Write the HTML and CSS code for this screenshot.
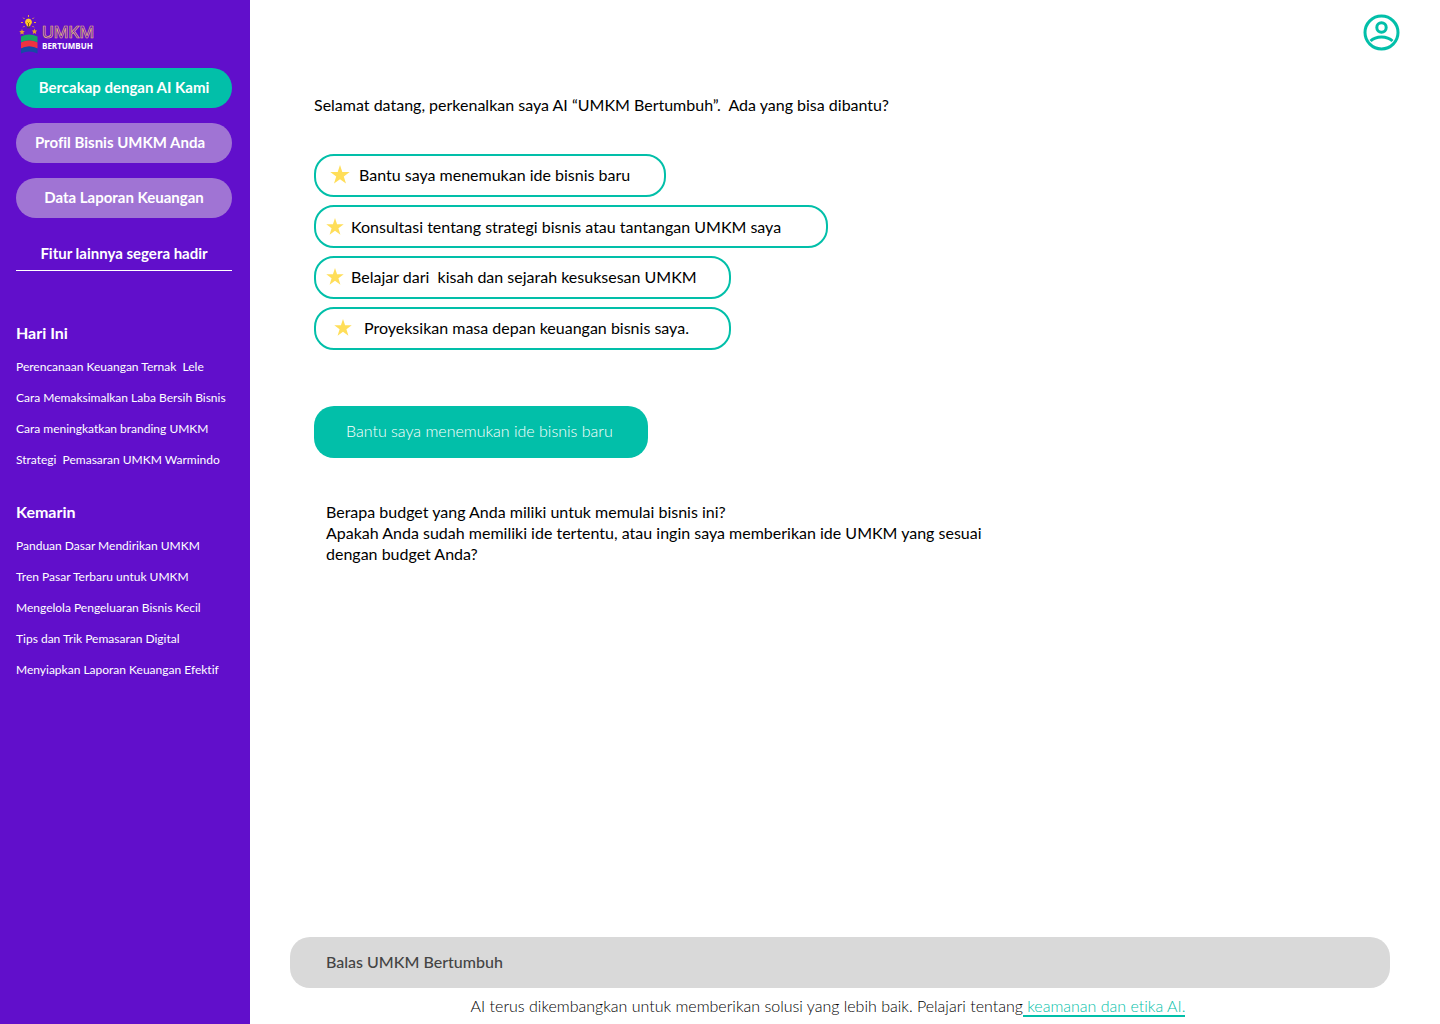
FILE: index.html
```html
<!DOCTYPE html>
<html lang="id">
<head>
<meta charset="utf-8">
<meta name="viewport" content="width=device-width, initial-scale=1">
<title>UMKM Bertumbuh</title>
<link rel="stylesheet" href="styles.css">
</head>
<body>
<svg width="0" height="0" class="sprite" aria-hidden="true">
  <symbol id="star" viewBox="0 0 20 20"><path d="M10 0 12.300 7 19.700 7 13.800 11.500 16 18.500 10 14.200 4 18.500 6.200 11.500 0.300 7 7.700 7Z" fill="#ffde59"/></symbol>
</svg>
<div class="app">
  <aside class="sidebar">
    <a class="logo" href="#" aria-label="UMKM Bertumbuh">
      <svg width="80" height="42" viewBox="0 0 80 42">
        <g stroke="#f5b82e" stroke-width="1" stroke-linecap="round">
          <path d="M10.500 1.500v1M5.500 4l.7.700M15.500 4l-.7.700M3.500 8.500h1M16.500 8.500h1M5.500 13l.7-.7M15.500 13l-.7-.7"/>
        </g>
        <path d="M10.500 4.500a3.600 3.600 0 0 0-2 6.500l.5 1.500h3l.5-1.500a3.600 3.600 0 0 0-2-6.500Z" fill="#ffc928"/>
        <path d="M9.500 8.500l1 1 1-1M10.500 9.500V12" stroke="#6b3b00" stroke-width=".8" fill="none"/>
        <path d="M9 12.500h3v1.800H9z" fill="#4b3a58"/>
        <path d="M4 15l.8 1.900 2 .2-1.500 1.300.4 2L4 19.400l-1.700 1 .4-2-1.500-1.300 2-.2ZM16.500 14.500l.8 1.900 2 .2-1.500 1.300.4 2-1.700-1-1.700 1 .4-2-1.500-1.300 2-.2Z" fill="#e9a02b"/>
        <path d="M3 22.500q8-4 16.500 0v6q-8.500-4-16.500 0Z" fill="#16a765"/>
        <path d="M3 28.500q8-4 16.500 0v6q-8.500-4-16.500 0Z" fill="#ef3340"/>
        <path d="M3 34.500q8-4 16.500 0v5q-8.500-4-16.500 0Z" fill="#1749a5"/>
        <text x="24" y="24" class="logo-outline">UMKM</text>
        <text x="24" y="35" class="logo-name">BERTUMBUH</text>
      </svg>
    </a>
    <nav class="menu">
      <button type="button" class="menu-button menu-button-active">Bercakap dengan AI Kami</button>
      <button type="button" class="menu-button menu-button-profile">Profil Bisnis UMKM Anda</button>
      <button type="button" class="menu-button">Data Laporan Keuangan</button>
    </nav>
    <p class="soon">Fitur lainnya segera hadir</p>
    <section class="history">
      <h2>Hari Ini</h2>
      <ul>
        <li><a href="#">Perencanaan Keuangan Ternak&nbsp; Lele</a></li>
        <li><a href="#">Cara Memaksimalkan Laba Bersih Bisnis</a></li>
        <li><a href="#">Cara meningkatkan branding UMKM</a></li>
        <li><a href="#">Strategi&nbsp; Pemasaran UMKM Warmindo</a></li>
      </ul>
    </section>
    <section class="history">
      <h2>Kemarin</h2>
      <ul>
        <li><a href="#">Panduan Dasar Mendirikan UMKM</a></li>
        <li><a href="#">Tren Pasar Terbaru untuk UMKM</a></li>
        <li><a href="#">Mengelola Pengeluaran Bisnis Kecil</a></li>
        <li><a href="#">Tips dan Trik Pemasaran Digital</a></li>
        <li><a href="#">Menyiapkan Laporan Keuangan Efektif</a></li>
      </ul>
    </section>
  </aside>
  <main class="main">
    <header class="topbar">
      <button type="button" class="account" aria-label="Akun">
        <svg width="38" height="38" viewBox="0 0 38 38" fill="none" stroke="#02bfa9" stroke-width="3">
          <circle cx="19.500" cy="18.500" r="16.500"/>
          <circle cx="19.500" cy="13.500" r="4.700"/>
          <path d="M8.500 27C14 21.500 25 21.500 30.500 27"/>
        </svg>
      </button>
    </header>
    <div class="chat">
      <p class="greeting">Selamat datang, perkenalkan saya AI “UMKM Bertumbuh”.&nbsp; Ada yang bisa dibantu?</p>
      <div class="suggestions">
        <button type="button" class="chip chip-idea"><svg class="star" viewBox="0 0 20 20"><use href="#star"/></svg>Bantu saya menemukan ide bisnis baru</button>
        <button type="button" class="chip chip-strategy"><svg class="star" viewBox="0 0 20 20"><use href="#star"/></svg>Konsultasi tentang strategi bisnis atau tantangan UMKM saya</button>
        <button type="button" class="chip"><svg class="star" viewBox="0 0 20 20"><use href="#star"/></svg>Belajar dari&nbsp; kisah dan sejarah kesuksesan UMKM</button>
        <button type="button" class="chip chip-projection"><svg class="star" viewBox="0 0 20 20"><use href="#star"/></svg>Proyeksikan masa depan keuangan bisnis saya.</button>
      </div>
      <p class="message">Bantu saya menemukan ide bisnis baru</p>
      <p class="answer">Berapa budget yang Anda miliki untuk memulai bisnis ini?<br>Apakah Anda sudah memiliki ide tertentu, atau ingin saya memberikan ide UMKM yang sesuai<br>dengan budget Anda?</p>
    </div>
    <footer class="composer">
      <input class="reply" type="text" placeholder="Balas UMKM Bertumbuh" aria-label="Balas UMKM Bertumbuh">
      <p class="notice">AI terus dikembangkan untuk memberikan solusi yang lebih baik. Pelajari tentang<a href="#">&nbsp;keamanan dan etika AI.</a></p>
    </footer>
  </main>
</div>
</body>
</html>
```
FILE: styles.css
```css
* { box-sizing: border-box; }

body {
  margin: 0;
  background: #fff;
  color: #000;
  font: 400 16px/21px Lato, sans-serif;
  font-variant-ligatures: none;
}

h2, p, ul { margin: 0; padding: 0; }
ul { list-style: none; }
button { border: 0; font: inherit; cursor: pointer; }
svg { display: block; flex: none; }
.sprite { position: absolute; }

.app {
  display: grid;
  grid-template-columns: 250px 1fr;
  min-height: 100vh;
}

.sidebar {
  padding: 14px 18px 24px 16px;
  background: #610fcb;
  color: #fff;
}

.logo { display: block; height: 54px; padding-left: 2px; }
.logo-outline {
  font: 500 16px Inter, sans-serif;
  fill: none;
  stroke: #e8bd72;
  stroke-width: 0.7px;
}
.logo-name { font: 700 8px "Open Sans", sans-serif; fill: #fff; }

.menu { display: grid; gap: 15px; }
.menu-button {
  height: 40px;
  padding: 0 0 2px;
  border-radius: 20px;
  background: #a074d4;
  color: #fff;
  font-size: 15px;
  font-weight: 700;
  white-space: nowrap;
}
.menu-button-active { background: #02bfa9; }
.menu-button-profile { padding-right: 8px; }

.soon {
  margin-bottom: 51px;
  padding: 25px 0 6px;
  border-bottom: 1px solid #fff;
  font-size: 15px;
  font-weight: 700;
  text-align: center;
}

.history { margin-bottom: 33px; }
.history h2 {
  margin-bottom: 16px;
  font-size: 16px;
  line-height: 21px;
  font-weight: 700;
}
.history ul { display: grid; gap: 15px; }
.history a {
  display: block;
  color: #fff;
  font-size: 12px;
  line-height: 16px;
  text-decoration: none;
  white-space: nowrap;
}

.main { display: flex; flex-direction: column; min-width: 0; }
.topbar { display: flex; justify-content: flex-end; padding: 14px 40px 0 0; }
.account { padding: 0; background: none; }

.chat {
  display: flex;
  flex: 1;
  flex-direction: column;
  align-items: flex-start;
  padding: 42px 64px;
}
.greeting { margin-bottom: 39px; }
.suggestions {
  display: flex;
  flex-direction: column;
  align-items: flex-start;
  gap: 8px;
  margin-bottom: 56px;
}
.chip {
  display: flex;
  align-items: center;
  gap: 7px;
  width: 417px;
  height: 43px;
  padding: 0 10px 2px;
  border: 2px solid #02bfa9;
  border-radius: 20px;
  background: #fff;
  color: #000;
  white-space: nowrap;
}
.star { width: 18px; height: 18px; }
.chip-idea { width: 352px; padding-left: 14px; gap: 9px; }
.chip-idea .star { width: 20px; height: 20px; }
.chip-strategy { width: 514px; padding-bottom: 0; }
.chip-projection { padding-left: 18px; gap: 12px; }

.message {
  min-width: 334px;
  margin-bottom: 43px;
  padding: 14px 32px 17px;
  border-radius: 20px;
  background: #02bfa9;
  color: #fff;
  font-weight: 300;
}
.answer { padding-left: 12px; }

.composer { padding: 0 50px 8px 40px; }
.reply {
  display: block;
  width: 100%;
  height: 51px;
  padding: 0 36px 2px;
  border: 0;
  border-radius: 20px;
  background: #d9d9d9;
  color: #444;
  font: 500 16px/21px Lato, sans-serif;
}
.reply::placeholder { color: #444; opacity: 1; }
.notice {
  margin-top: 7px;
  padding-right: 24px;
  font-weight: 300;
  text-align: center;
}
.notice a {
  border-bottom: 2px solid #02bfa9;
  color: #02bfa9;
  text-decoration: none;
}
```
